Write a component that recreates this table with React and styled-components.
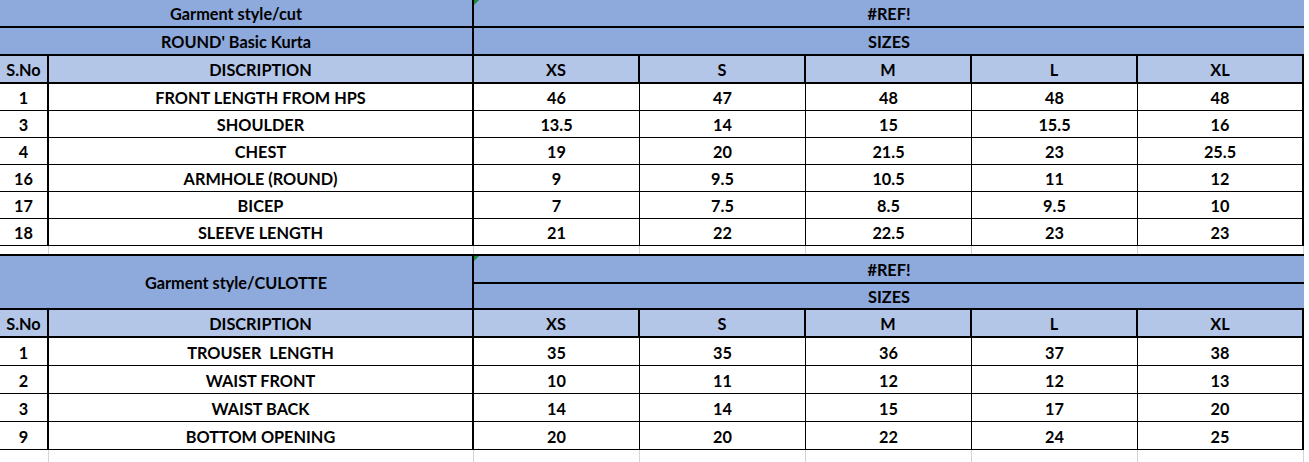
import React from 'react'
import styled, { createGlobalStyle, css } from 'styled-components'

const GlobalStyle = createGlobalStyle`
    html, body {
        margin: 0;
        padding: 0;
        background: #ffffff;
    }
    body {
        font-family: Lato, "Liberation Sans", sans-serif;
    }
`

const DARK = '#8ea9db'
const LIGHT = '#b4c6e7'
const GRID_LINE = '#d4d4d4'

const SIZES = ['XS', 'S', 'M', 'L', 'XL']

const kurta = [
    ['1', 'FRONT LENGTH FROM HPS', ['46', '47', '48', '48', '48']],
    ['3', 'SHOULDER', ['13.5', '14', '15', '15.5', '16']],
    ['4', 'CHEST', ['19', '20', '21.5', '23', '25.5']],
    ['16', 'ARMHOLE (ROUND)', ['9', '9.5', '10.5', '11', '12']],
    ['17', 'BICEP', ['7', '7.5', '8.5', '9.5', '10']],
    ['18', 'SLEEVE LENGTH', ['21', '22', '22.5', '23', '23']],
]

const culotte = [
    ['1', 'TROUSER  LENGTH', ['35', '35', '36', '37', '38']],
    ['2', 'WAIST FRONT', ['10', '11', '12', '12', '13']],
    ['3', 'WAIST BACK', ['14', '14', '15', '17', '20']],
    ['9', 'BOTTOM OPENING', ['20', '20', '22', '24', '25']],
]

const Sheet = styled.div`
    display: flex;
    flex-direction: column;
    width: 1309px;
    height: 462px;
    overflow: hidden;
    background: #ffffff;
`

const Block = styled.div`
    display: grid;
    grid-template-columns: 49px 425px repeat(5, 166px);
    grid-template-rows: ${p => p.$rows};
    width: 1304px;
    ${p => p.$topRule && css`border-top: 2px solid #000;`}
`

const lineWidth = { thick: '2px', thin: '1px', none: '0' }

const Cell = styled.div`
    position: relative;
    box-sizing: border-box;
    display: flex;
    align-items: center;
    justify-content: center;
    grid-column: span ${p => p.$span || 1};
    grid-row: span ${p => p.$rowSpan || 1};
    background: ${p => (p.$tone === 'dark' ? DARK : p.$tone === 'light' ? LIGHT : '#ffffff')};
    border-right: ${p => lineWidth[p.$right || 'thin']} solid #000;
    border-bottom: ${p => lineWidth[p.$bottom || 'thin']} solid #000;
    font-size: 16.3px;
    font-weight: 700;
    color: #000;
    white-space: pre;
    padding-top: 1px;
    ${p => p.$flag && css`
        &::before {
            content: '';
            position: absolute;
            top: 0;
            left: 0;
            border-top: 5px solid #1f8a3a;
            border-right: 5px solid transparent;
        }
    `}
`

const Filler = styled.div`
    box-sizing: border-box;
    border-right: 1px solid ${GRID_LINE};
    height: ${p => p.$h}px;
`

const FillerRow = styled.div`
    display: grid;
    grid-template-columns: 49px 425px repeat(5, 166px);
    width: 1304px;
`

const Blank = ({ h }) => (
    <FillerRow>
        {Array.from({ length: 7 }).map((_, i) => <Filler key={i} $h={h} />)}
    </FillerRow>
)

const HeaderRow = () => (
    <>
        <Cell $tone="light" $right="thick" $bottom="thick">S.No</Cell>
        <Cell $tone="light" $right="thick" $bottom="thick">DISCRIPTION</Cell>
        {SIZES.map(s => (
            <Cell key={s} $tone="light" $right="thick" $bottom="thick">{s}</Cell>
        ))}
    </>
)

const DataRows = ({ rows }) => rows.map(([no, desc, vals]) => (
    <React.Fragment key={no + desc}>
        <Cell $right="thick">{no}</Cell>
        <Cell $right="thick">{desc}</Cell>
        {vals.map((v, i) => (
            <Cell key={i} $right={i === 4 ? 'thick' : 'thin'}>{v}</Cell>
        ))}
    </React.Fragment>
))

const App = () => {
    return (
        <Sheet>
            <GlobalStyle />
            <Block $rows="28px 28px 28px repeat(6, 27px)">
                <Cell $span={2} $tone="dark" $right="thick" $bottom="thick">Garment style/cut</Cell>
                <Cell $span={5} $tone="dark" $right="none" $bottom="thick" $flag>#REF!</Cell>
                <Cell $span={2} $tone="dark" $right="thick" $bottom="thick">ROUND' Basic Kurta</Cell>
                <Cell $span={5} $tone="dark" $right="none" $bottom="thick">SIZES</Cell>
                <HeaderRow />
                <DataRows rows={kurta} />
            </Block>
            <Blank h={8} />
            <Block $topRule $rows="28px 26px 28px repeat(4, 28px)">
                <Cell $span={2} $rowSpan={2} $tone="dark" $right="thick" $bottom="thick">Garment style/CULOTTE</Cell>
                <Cell $span={5} $tone="dark" $right="none" $bottom="thick" $flag>#REF!</Cell>
                <Cell $span={5} $tone="dark" $right="none" $bottom="thick">SIZES</Cell>
                <HeaderRow />
                <DataRows rows={culotte} />
            </Block>
            <Blank h={20} />
        </Sheet>
    )
}

export default App
